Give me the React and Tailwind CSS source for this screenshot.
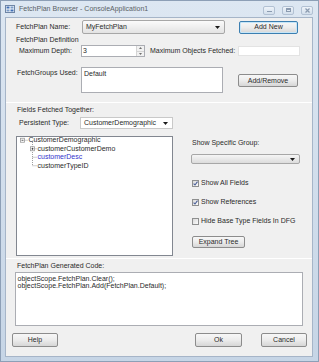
import React from "react";

const Arrow = () => (
  <svg width="5" height="3" viewBox="0 0 5 3" className="block">
    <polygon points="0,0 5,0 2.5,3" fill="#1a1a1a" />
  </svg>
);

const Btn = ({ children, className = "", def = false }) => (
  <div
    className={`flex items-center justify-center rounded-[2px] border bg-gradient-to-b from-[#f7f7f7] via-[#ececec] to-[#d6d6d6] leading-[8px] ${
      def ? "border-[#3c7fb1] shadow-[inset_0_0_0_1px_#c6e6f8]" : "border-[#8c8c8c]"
    } ${className}`}
  >
    {children}
  </div>
);

const Check = ({ checked, label, className = "" }) => (
  <div className={`flex items-center h-[8px] pl-[1px] ${className}`}>
    <div className="w-[7px] h-[7px] border border-[#8e8f8f] bg-gradient-to-br from-[#dadada] to-[#fbfbfb] flex items-center justify-center">
      {checked && (
        <svg width="5" height="5" viewBox="0 0 5 5" className="block">
          <path d="M0.6 2.6 L2 4 L4.5 0.7" stroke="#4a5f97" strokeWidth="1.1" fill="none" />
        </svg>
      )}
    </div>
    <span className="ml-[2px] leading-[8px]">{label}</span>
  </div>
);

const WinBtn = ({ children }) => (
  <div className="w-[12px] h-[9px] rounded-[2px] border border-[#b2c1d3] bg-gradient-to-b from-[#eef3f9] to-[#d3dfec] flex items-center justify-center">
    {children}
  </div>
);

export default function App() {
  return (
    <div className="w-[319px] h-[362px] bg-gradient-to-b from-[#dde7f2] to-[#c6d5e6] border border-[#8d9fb6] flex flex-col font-['Liberation_Sans',Arial,sans-serif] text-[7px] text-[#2a2a2a] overflow-hidden">
      {/* Title bar */}
      <div className="h-[16px] flex items-center shrink-0">
        <svg width="10" height="8" viewBox="0 0 10 8" className="ml-[4px] block">
          <rect x="0.5" y="0.5" width="9" height="7" fill="#f4f7fb" stroke="#6f86a6" />
          <rect x="1.5" y="1.5" width="3" height="2" fill="#3f6fb5" />
          <rect x="5.5" y="1.5" width="3" height="2" fill="#7a9cc8" />
          <rect x="1.5" y="4.5" width="3" height="2" fill="#7a9cc8" />
          <rect x="5.5" y="4.5" width="3" height="2" fill="#3f6fb5" />
        </svg>
        <span className="ml-[4px] text-[7px] leading-[8px] text-[#5a5f66]">
          FetchPlan Browser - ConsoleApplication1
        </span>
        <div className="ml-auto mr-[5px] flex items-center gap-[7px] mt-[2px]">
          <WinBtn>
            <div className="w-[5px] h-[1.5px] bg-[#8b9bb0] mt-[3px]" />
          </WinBtn>
          <WinBtn>
            <div className="w-[5px] h-[4px] border border-[#8b9bb0] border-t-2" />
          </WinBtn>
          <WinBtn>
            <svg width="5" height="5" viewBox="0 0 5 5" className="block">
              <path d="M0.5 0.5 L4.5 4.5 M4.5 0.5 L0.5 4.5" stroke="#8b9bb0" strokeWidth="1.2" />
            </svg>
          </WinBtn>
        </div>
      </div>

      {/* Client area */}
      <div className="ml-[4px] mr-[5px] mb-[4px] flex-1 bg-[#f0f0f0] border border-[#a6b5c8] flex flex-col">
        {/* Row 1 */}
        <div className="mt-[2px] h-[14px] flex items-center pl-[10px]">
          <span className="w-[66px] leading-[8px]">FetchPlan Name:</span>
          <div className="w-[143px] h-[14px] rounded-[2px] border border-[#a7a7a7] bg-gradient-to-b from-[#fbfbfb] to-[#e3e3e3] flex items-center pl-[3px] pr-[4px]">
            <span className="leading-[8px]">MyFetchPlan</span>
            <div className="ml-auto">
              <Arrow />
            </div>
          </div>
          <Btn def className="ml-[14px] w-[59px] h-[13px]">Add New</Btn>
        </div>

        <div className="mt-[2px] h-[8px] pl-[10px] leading-[8px]">FetchPlan Definition</div>

        {/* Max depth row */}
        <div className="mt-[1px] h-[12px] flex items-center pl-[13px]">
          <span className="w-[62px] leading-[8px]">Maximum Depth:</span>
          <div className="w-[64px] h-[12px] border border-[#abadb3] bg-white flex items-center">
            <span className="pl-[1px] leading-[8px]">3</span>
            <div className="ml-auto w-[8px] h-full flex flex-col bg-[#f1f1f1] border-l border-[#d4d4d4]">
              <div className="flex-1 flex items-center justify-center border-b border-[#d4d4d4]">
                <svg width="3" height="2" viewBox="0 0 3 2" className="block">
                  <polygon points="0,2 3,2 1.5,0" fill="#707070" />
                </svg>
              </div>
              <div className="flex-1 flex items-center justify-center">
                <svg width="3" height="2" viewBox="0 0 3 2" className="block">
                  <polygon points="0,0 3,0 1.5,2" fill="#707070" />
                </svg>
              </div>
            </div>
          </div>
          <span className="ml-[5px] w-[88px] leading-[8px]">Maximum Objects Fetched:</span>
          <div className="w-[62px] h-[10px] border border-[#e3e3e3] bg-white" />
        </div>

        {/* FetchGroups row */}
        <div className="mt-[10px] flex items-start pl-[11px]">
          <span className="w-[64px] leading-[8px] mt-[2px]">FetchGroups Used:</span>
          <div className="w-[142px] h-[26px] border border-[#abadb3] bg-white pl-[2px] pt-[1.5px]">
            <span className="leading-[8px] block">Default</span>
          </div>
          <Btn className="ml-[15px] mt-[7px] w-[60px] h-[13px]">Add/Remove</Btn>
        </div>

        {/* separator */}
        <div className="mt-[9px] h-px bg-[#e2e2e2] border-b border-white" />

        <div className="mt-[3px] h-[8px] pl-[11px] leading-[8px]">Fields Fetched Together:</div>

        {/* Persistent type row */}
        <div className="mt-[3px] h-[12px] flex items-center pl-[13px]">
          <span className="w-[61px] leading-[8px]">Persistent Type:</span>
          <div className="w-[93px] h-[12px] border border-[#c9c9c9] bg-white flex items-center pl-[3px] pr-[4px]">
            <span className="leading-[8px]">CustomerDemographic</span>
            <div className="ml-auto">
              <Arrow />
            </div>
          </div>
        </div>

        {/* Tree + right column */}
        <div className="mt-[7px] flex items-start">
          <div className="ml-[10px] w-[157px] h-[120px] border border-[#828790] bg-white relative shrink-0">
            <svg width="30" height="34" viewBox="0 0 30 34" className="absolute left-0 top-0 block">
              <g stroke="#a0a0a0" strokeWidth="1" fill="none">
                <line x1="7.5" y1="3.25" x2="11" y2="3.25" strokeDasharray="1 1" />
                <line x1="15.5" y1="5" x2="15.5" y2="29" strokeDasharray="1 1" />
                <line x1="17.5" y1="11.75" x2="20" y2="11.75" strokeDasharray="1 1" />
                <line x1="15.5" y1="20.25" x2="20" y2="20.25" strokeDasharray="1 1" />
                <line x1="15.5" y1="28.75" x2="20" y2="28.75" strokeDasharray="1 1" />
              </g>
              <rect x="3.5" y="1.25" width="4" height="4" fill="#fff" stroke="#9a9a9a" strokeWidth="0.8" />
              <line x1="4.5" y1="3.25" x2="6.5" y2="3.25" stroke="#333" strokeWidth="0.8" />
              <rect x="13.5" y="9.75" width="4" height="4" fill="#fff" stroke="#9a9a9a" strokeWidth="0.8" />
              <line x1="14.5" y1="11.75" x2="16.5" y2="11.75" stroke="#333" strokeWidth="0.8" />
              <line x1="15.5" y1="10.75" x2="15.5" y2="12.75" stroke="#333" strokeWidth="0.8" />
            </svg>
            <div className="mt-[-1px] flex flex-col">
              <div className="h-[8.5px] leading-[8.5px] pl-[11.5px]">CustomerDemographic</div>
              <div className="h-[8.5px] leading-[8.5px] pl-[20.5px]">customerCustomerDemo</div>
              <div className="h-[8.5px] leading-[8.5px] pl-[20.5px] text-[#3333cc]">customerDesc</div>
              <div className="h-[8.5px] leading-[8.5px] pl-[20.5px]">customerTypeID</div>
            </div>
          </div>

          <div className="ml-[18px] w-[110px] flex flex-col">
            <div className="mt-[2.5px] h-[8px] pl-[1px] leading-[8px]">Show Specific Group:</div>
            <div className="mt-[7.5px] w-[109px] h-[10px] rounded-[2px] border border-[#a7a7a7] bg-gradient-to-b from-[#f5f5f5] to-[#dcdcdc] flex items-center justify-end pr-[4px]">
              <Arrow />
            </div>
            <Check checked label="Show All Fields" className="mt-[15px]" />
            <Check checked label="Show References" className="mt-[11px]" />
            <Check label="Hide Base Type Fields In DFG" className="mt-[11px]" />
            <Btn className="mt-[11px] ml-[1px] w-[53px] h-[12px]">Expand Tree</Btn>
          </div>
        </div>

        {/* separator */}
        <div className="mt-[2px] h-px bg-[#c8c8c8] border-b border-white" />

        <div className="mt-[3px] h-[8px] pl-[11px] leading-[8px]">FetchPlan Generated Code:</div>

        <div className="mt-[2px] ml-[9px] w-[288px] h-[54px] border border-[#abadb3] bg-white pl-[1.5px] pt-[2px]">
          <div className="h-[7px] leading-[7px]">objectScope.FetchPlan.Clear();</div>
          <div className="h-[7px] leading-[7px]">objectScope.FetchPlan.Add(FetchPlan.Default);</div>
        </div>

        {/* Bottom buttons */}
        <div className="mt-[7px] h-[14px] flex items-center pl-[6px]">
          <Btn className="w-[46px] h-[14px]">Help</Btn>
          <Btn className="ml-[137px] w-[47px] h-[14px]">Ok</Btn>
          <Btn className="ml-[19px] w-[46px] h-[14px]">Cancel</Btn>
        </div>
      </div>
    </div>
  );
}
